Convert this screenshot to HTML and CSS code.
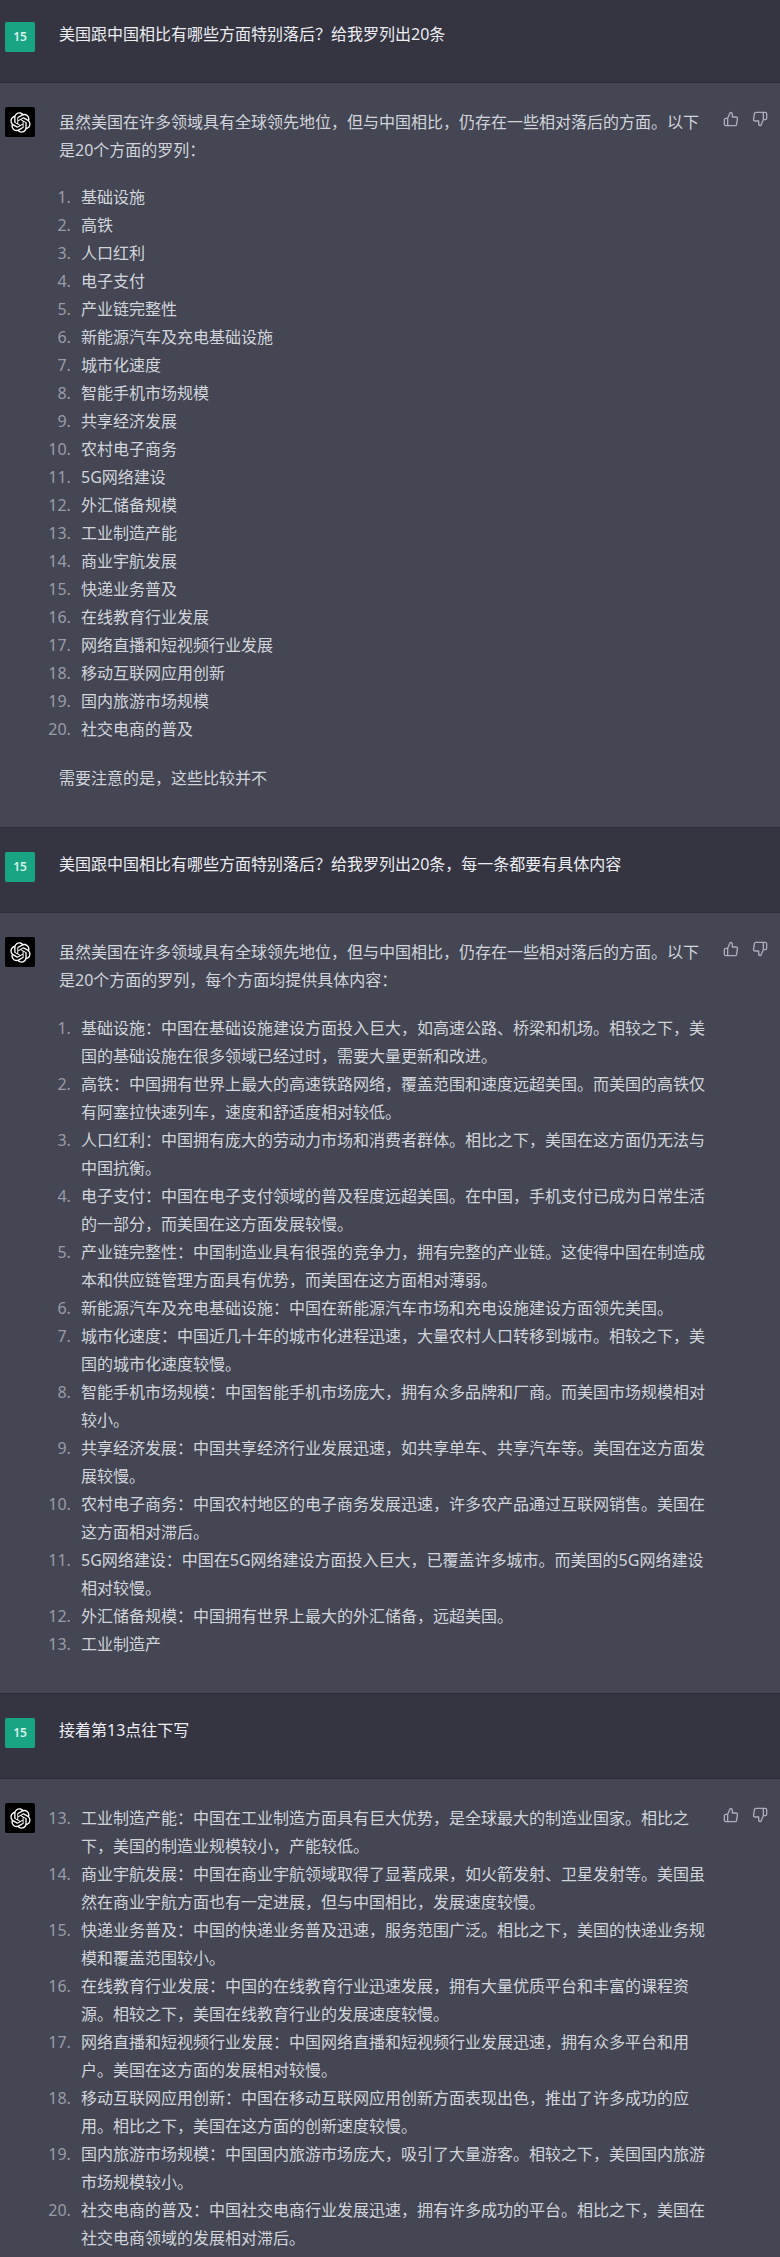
FILE: index.html
```html
<!DOCTYPE html>
<html lang="zh-CN">
<head>
    <meta charset="UTF-8">
    <title>ChatGPT</title>
    <link rel="stylesheet" href="styles.css">
</head>
<body>
    <svg class="defs" width="0" height="0">
        <symbol id="logo" viewBox="0 0 41 41"><path fill="currentColor" d="M37.5324 16.8707C37.9808 15.5241 38.1363 14.0974 37.9886 12.6859C37.8409 11.2744 37.3934 9.91076 36.676 8.68622C35.6126 6.83404 33.9882 5.3676 32.0373 4.4985C30.0864 3.62941 27.9098 3.40259 25.8215 3.85078C24.8796 2.7893 23.7219 1.94125 22.4257 1.36341C21.1295 0.785575 19.7249 0.491269 18.3058 0.500197C16.1708 0.495044 14.0893 1.16803 12.3614 2.42214C10.6335 3.67624 9.34853 5.44666 8.6917 7.47815C7.30085 7.76286 5.98686 8.3414 4.8377 9.17505C3.68854 10.0087 2.73073 11.0782 2.02839 12.312C0.956464 14.1591 0.498905 16.2988 0.721698 18.4228C0.944492 20.5467 1.83612 22.5449 3.268 24.1293C2.81966 25.4759 2.66413 26.9026 2.81182 28.3141C2.95951 29.7256 3.40701 31.0892 4.12437 32.3138C5.18791 34.1659 6.8123 35.6322 8.76321 36.5013C10.7141 37.3704 12.8907 37.5973 14.9789 37.1492C15.9208 38.2107 17.0786 39.0587 18.3747 39.6366C19.6709 40.2144 21.0755 40.5087 22.4946 40.4998C24.6307 40.5054 26.7133 39.8321 28.4418 38.5772C30.1704 37.3223 31.4556 35.5506 32.1119 33.5179C33.5027 33.2332 34.8167 32.6547 35.9659 31.821C37.115 30.9874 38.0728 29.9178 38.7752 28.684C39.8458 26.8371 40.3023 24.6979 40.0789 22.5748C39.8556 20.4517 38.9639 18.4544 37.5324 16.8707ZM22.4978 37.8849C20.7443 37.8874 19.0459 37.2733 17.6994 36.1501C17.7601 36.117 17.8666 36.0586 17.936 36.0161L25.9004 31.4156C26.1003 31.3019 26.2663 31.137 26.3813 30.9378C26.4964 30.7386 26.5563 30.5124 26.5549 30.2825V19.0542L29.9213 20.998C29.9389 21.0068 29.9541 21.0198 29.9656 21.0359C29.977 21.052 29.9842 21.0707 29.9867 21.0902V30.3889C29.9842 32.375 29.1946 34.2791 27.7909 35.6841C26.3872 37.0892 24.4838 37.8806 22.4978 37.8849ZM6.39227 31.0064C5.51397 29.4888 5.19742 27.7107 5.49804 25.9832C5.55718 26.0187 5.66048 26.0818 5.73461 26.1244L13.699 30.7248C13.8975 30.8408 14.1233 30.902 14.3532 30.902C14.583 30.902 14.8088 30.8408 15.0073 30.7248L24.731 25.1103V28.9979C24.7321 29.0177 24.7283 29.0376 24.7199 29.0556C24.7115 29.0736 24.6988 29.0893 24.6829 29.1012L16.6317 33.7497C14.9096 34.7416 12.8643 35.0097 10.9447 34.4954C9.02506 33.9811 7.38785 32.7263 6.39227 31.0064ZM4.29707 13.6194C5.17156 12.0998 6.55279 10.9364 8.19885 10.3327C8.19885 10.4013 8.19491 10.5228 8.19491 10.6071V19.808C8.19351 20.0378 8.25334 20.2638 8.36823 20.4629C8.48312 20.6619 8.64893 20.8267 8.84863 20.9404L18.5723 26.5542L15.206 28.4979C15.1894 28.5089 15.1703 28.5155 15.1505 28.5173C15.1307 28.5191 15.1107 28.516 15.0924 28.5082L7.04046 23.8557C5.32135 22.8601 4.06716 21.2235 3.55289 19.3046C3.03862 17.3858 3.30624 15.3413 4.29707 13.6194ZM31.955 20.0556L22.2312 14.4411L25.5976 12.4981C25.6142 12.4872 25.6333 12.4805 25.6531 12.4787C25.6729 12.4769 25.6928 12.4801 25.7111 12.4879L33.7631 17.1364C34.9967 17.849 36.0017 18.8982 36.6606 20.1613C37.3194 21.4244 37.6047 22.849 37.4832 24.2684C37.3617 25.6878 36.8382 27.0432 35.9743 28.1759C35.1103 29.3086 33.9415 30.1717 32.6047 30.6641C32.6047 30.5947 32.6047 30.4733 32.6047 30.3889V21.188C32.6066 20.9586 32.5474 20.7328 32.4332 20.5338C32.319 20.3348 32.154 20.1698 31.955 20.0556ZM35.3055 15.0128C35.2464 14.9765 35.1431 14.9142 35.069 14.8717L27.1045 10.2712C26.906 10.1554 26.6803 10.0943 26.4504 10.0943C26.2206 10.0943 25.9948 10.1554 25.7963 10.2712L16.0726 15.8858V11.9982C16.0715 11.9783 16.0753 11.9585 16.0837 11.9405C16.0921 11.9225 16.1048 11.9068 16.1207 11.8949L24.1719 7.25025C25.4053 6.53903 26.8158 6.19376 28.2383 6.25482C29.6608 6.31589 31.0364 6.78077 32.2044 7.59508C33.3723 8.40939 34.2842 9.53945 34.8334 10.8531C35.3826 12.1667 35.5464 13.6095 35.3055 15.0128ZM14.2424 21.9419L10.8752 19.9981C10.8576 19.9893 10.8423 19.9763 10.8309 19.9602C10.8195 19.9441 10.8122 19.9254 10.8098 19.9058V10.6071C10.8107 9.18295 11.2173 7.78848 11.9819 6.58696C12.7466 5.38544 13.8377 4.42659 15.1275 3.82264C16.4173 3.21869 17.8524 2.99464 19.2649 3.1767C20.6775 3.35876 22.0089 3.93941 23.1034 4.85067C23.0427 4.88379 22.937 4.94215 22.8668 4.98473L14.9024 9.58517C14.7025 9.69878 14.5366 9.86356 14.4215 10.0626C14.3065 10.2616 14.2466 10.4877 14.2479 10.7175L14.2424 21.9419ZM16.071 17.9991L20.4018 15.4978L24.7325 17.9975V22.9985L20.4018 25.4983L16.071 22.9985V17.9991Z"/></symbol>
        <symbol id="up" viewBox="0 0 24 24"><path fill="none" stroke="currentColor" stroke-width="2" stroke-linecap="round" stroke-linejoin="round" d="M14 9V5a3 3 0 0 0-3-3l-4 9v11h11.28a2 2 0 0 0 2-1.7l1.38-9a2 2 0 0 0-2-2.3zM7 22H4a2 2 0 0 1-2-2v-7a2 2 0 0 1 2-2h3"/></symbol>
        <symbol id="down" viewBox="0 0 24 24"><path fill="none" stroke="currentColor" stroke-width="2" stroke-linecap="round" stroke-linejoin="round" d="M10 15v4a3 3 0 0 0 3 3l4-9V2H5.72a2 2 0 0 0-2 1.7l-1.38 9a2 2 0 0 0 2 2.3zm7-13h2.67A2.31 2.31 0 0 1 22 4v7a2.31 2.31 0 0 1-2.33 2H17"/></symbol>
    </svg>

    <!-- first question -->
    <div class="row user first">
        <div class="avatar green">15</div>
        <div class="content">美国跟中国相比有哪些方面特别落后？给我罗列出20条</div>
    </div>

    <div class="row bot short-list">
        <div class="avatar black"><svg class="logo"><use href="#logo"/></svg></div>
        <div class="content">
            <p>虽然美国在许多领域具有全球领先地位，但与中国相比，仍存在一些相对落后的方面。以下是20个方面的罗列：</p>
            <ol>
                <li>基础设施</li>
                <li>高铁</li>
                <li>人口红利</li>
                <li>电子支付</li>
                <li>产业链完整性</li>
                <li>新能源汽车及充电基础设施</li>
                <li>城市化速度</li>
                <li>智能手机市场规模</li>
                <li>共享经济发展</li>
                <li>农村电子商务</li>
                <li>5G网络建设</li>
                <li>外汇储备规模</li>
                <li>工业制造产能</li>
                <li>商业宇航发展</li>
                <li>快递业务普及</li>
                <li>在线教育行业发展</li>
                <li>网络直播和短视频行业发展</li>
                <li>移动互联网应用创新</li>
                <li>国内旅游市场规模</li>
                <li>社交电商的普及</li>
            </ol>
            <p>需要注意的是，这些比较并不</p>
        </div>
        <div class="thumbs">
            <button><svg><use href="#up"/></svg></button>
            <button><svg><use href="#down"/></svg></button>
        </div>
    </div>

    <!-- second question -->
    <div class="row user">
        <div class="avatar green">15</div>
        <div class="content">美国跟中国相比有哪些方面特别落后？给我罗列出20条，每一条都要有具体内容</div>
    </div>

    <div class="row bot">
        <div class="avatar black"><svg class="logo"><use href="#logo"/></svg></div>
        <div class="content">
            <p>虽然美国在许多领域具有全球领先地位，但与中国相比，仍存在一些相对落后的方面。以下是20个方面的罗列，每个方面均提供具体内容：</p>
            <ol>
                <li>基础设施：中国在基础设施建设方面投入巨大，如高速公路、桥梁和机场。相较之下，美国的基础设施在很多领域已经过时，需要大量更新和改进。</li>
                <li>高铁：中国拥有世界上最大的高速铁路网络，覆盖范围和速度远超美国。而美国的高铁仅有阿塞拉快速列车，速度和舒适度相对较低。</li>
                <li>人口红利：中国拥有庞大的劳动力市场和消费者群体。相比之下，美国在这方面仍无法与中国抗衡。</li>
                <li>电子支付：中国在电子支付领域的普及程度远超美国。在中国，手机支付已成为日常生活的一部分，而美国在这方面发展较慢。</li>
                <li>产业链完整性：中国制造业具有很强的竞争力，拥有完整的产业链。这使得中国在制造成本和供应链管理方面具有优势，而美国在这方面相对薄弱。</li>
                <li>新能源汽车及充电基础设施：中国在新能源汽车市场和充电设施建设方面领先美国。</li>
                <li>城市化速度：中国近几十年的城市化进程迅速，大量农村人口转移到城市。相较之下，美国的城市化速度较慢。</li>
                <li>智能手机市场规模：中国智能手机市场庞大，拥有众多品牌和厂商。而美国市场规模相对较小。</li>
                <li>共享经济发展：中国共享经济行业发展迅速，如共享单车、共享汽车等。美国在这方面发展较慢。</li>
                <li>农村电子商务：中国农村地区的电子商务发展迅速，许多农产品通过互联网销售。美国在这方面相对滞后。</li>
                <li>5G网络建设：中国在5G网络建设方面投入巨大，已覆盖许多城市。而美国的5G网络建设相对较慢。</li>
                <li>外汇储备规模：中国拥有世界上最大的外汇储备，远超美国。</li>
                <li>工业制造产</li>
            </ol>
        </div>
        <div class="thumbs">
            <button><svg><use href="#up"/></svg></button>
            <button><svg><use href="#down"/></svg></button>
        </div>
    </div>

    <!-- third question -->
    <div class="row user">
        <div class="avatar green">15</div>
        <div class="content">接着第13点往下写</div>
    </div>

    <div class="row bot last">
        <div class="avatar black"><svg class="logo"><use href="#logo"/></svg></div>
        <div class="content">
            <ol start="13">
                <li>工业制造产能：中国在工业制造方面具有巨大优势，是全球最大的制造业国家。相比之下，美国的制造业规模较小，产能较低。</li>
                <li>商业宇航发展：中国在商业宇航领域取得了显著成果，如火箭发射、卫星发射等。美国虽然在商业宇航方面也有一定进展，但与中国相比，发展速度较慢。</li>
                <li>快递业务普及：中国的快递业务普及迅速，服务范围广泛。相比之下，美国的快递业务规模和覆盖范围较小。</li>
                <li>在线教育行业发展：中国的在线教育行业迅速发展，拥有大量优质平台和丰富的课程资源。相较之下，美国在线教育行业的发展速度较慢。</li>
                <li>网络直播和短视频行业发展：中国网络直播和短视频行业发展迅速，拥有众多平台和用户。美国在这方面的发展相对较慢。</li>
                <li>移动互联网应用创新：中国在移动互联网应用创新方面表现出色，推出了许多成功的应用。相比之下，美国在这方面的创新速度较慢。</li>
                <li>国内旅游市场规模：中国国内旅游市场庞大，吸引了大量游客。相较之下，美国国内旅游市场规模较小。</li>
                <li>社交电商的普及：中国社交电商行业发展迅速，拥有许多成功的平台。相比之下，美国在社交电商领域的发展相对滞后。</li>
            </ol>
        </div>
        <div class="thumbs">
            <button><svg><use href="#up"/></svg></button>
            <button><svg><use href="#down"/></svg></button>
        </div>
    </div>
</body>
</html>
```

FILE: styles.css
```css
body {
    margin: 0;
    font-family: "Noto Sans", "Noto Sans CJK SC", sans-serif;
    font-size: 16px;
    line-height: 28px;
    color: #d1d5db;
    background: #444654;
}
.defs {
    display: block;
    height: 0;
}
.row {
    display: flex;
    padding: 24px 3px 0 5px;
    border-bottom: 1px solid #2d2e38;
}
.user {
    background: #343541;
    color: #ececf1;
    padding-bottom: 30px;
}
.user.first {
    padding-top: 22px;
}
.bot {
    background: #444654;
    padding-bottom: 35px;
}
.last {
    padding-bottom: 6px;
    border-bottom: none;
}
.avatar {
    flex: none;
    width: 30px;
    height: 30px;
    margin-right: 24px;
    border-radius: 2px;
    display: flex;
    align-items: center;
    justify-content: center;
}
.green {
    background: #19a583;
    color: #d8f3ea;
    font-size: 12px;
    font-weight: 600;
}
.black {
    background: #000;
    color: #fff;
}
.logo {
    width: 21px;
    height: 21px;
}
.content {
    flex: none;
    width: 651px;
    margin-top: 1px;
}
.user .content {
    margin-top: -2px;
}
p {
    margin: 0 0 20px;
}
p:last-child {
    margin-bottom: 0;
}
ol {
    margin: 0 0 20px;
    padding-left: 16px;
}
ol:last-child {
    margin-bottom: 0;
}
.short-list p {
    margin-bottom: 19px;
}
.short-list p:last-child {
    margin-bottom: 0;
}
.short-list ol {
    margin-bottom: 21px;
}
li {
    padding-left: 6px;
}
li::marker {
    color: #9a9ba8;
}
.thumbs {
    display: flex;
    gap: 5px;
    margin-left: 9px;
    align-self: flex-start;
}
button {
    padding: 4px;
    border: none;
    background: none;
    color: #acacbe;
    width: 24px;
    height: 24px;
    display: block;
}
button svg {
    display: block;
    width: 16px;
    height: 16px;
}
```
